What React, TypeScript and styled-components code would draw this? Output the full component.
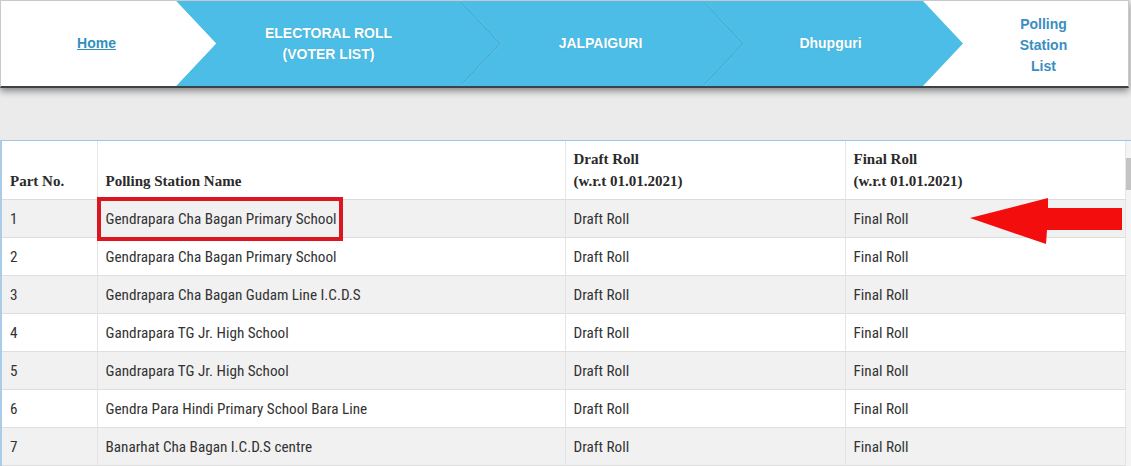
import React from "react";
import styled, { createGlobalStyle } from "styled-components";

const GlobalStyle = createGlobalStyle`
  html, body {
    margin: 0;
    padding: 0;
    background: #ebebeb;
    overflow: hidden;
  }
`;

interface Crumb {
  label: string[];
  tone: "home" | "blue" | "current";
  width: number;
  shift?: number;
}

const crumbs: Crumb[] = [
  { label: ["Home"], tone: "home", width: 215, shift: 8 },
  { label: ["ELECTORAL ROLL", "(VOTER LIST)"], tone: "blue", width: 325, shift: -10 },
  { label: ["JALPAIGURI"], tone: "blue", width: 283, shift: -2 },
  { label: ["Dhupguri"], tone: "blue", width: 259, shift: -3 },
  { label: ["Polling", "Station", "List"], tone: "current", width: 209, shift: -4 },
];

const rows = [
  ["1", "Gendrapara Cha Bagan Primary School"],
  ["2", "Gendrapara Cha Bagan Primary School"],
  ["3", "Gendrapara Cha Bagan Gudam Line I.C.D.S"],
  ["4", "Gandrapara TG Jr. High School"],
  ["5", "Gandrapara TG Jr. High School"],
  ["6", "Gendra Para Hindi Primary School Bara Line"],
  ["7", "Banarhat Cha Bagan I.C.D.S centre"],
];

export default function App() {
  return (
    <>
      <GlobalStyle />
      <Page>
        <Breadcrumb>
          {crumbs.map((c, i) => (
            <CrumbItem key={i} $tone={c.tone} $w={c.width} $first={i === 0}>
              {c.tone === "blue" && i < 3 && (
                <Divider viewBox="0 0 40 86" preserveAspectRatio="none">
                  <polyline
                    points="0,0 40,43 0,86"
                    fill="none"
                    stroke="#3fa9d3"
                    strokeWidth="2"
                  />
                </Divider>
              )}
              <CrumbText $tone={c.tone} $shift={c.shift ?? 0}>
                {c.label.map((l) => (
                  <span key={l}>{l}</span>
                ))}
              </CrumbText>
            </CrumbItem>
          ))}
        </Breadcrumb>

        <TablePanel>
          <Table>
            <colgroup>
              <col style={{ width: 95 }} />
              <col style={{ width: 468 }} />
              <col style={{ width: 280 }} />
              <col style={{ width: 280 }} />
            </colgroup>
            <thead>
              <tr>
                <Th>Part No.</Th>
                <Th>Polling Station Name</Th>
                <Th>
                  Draft Roll
                  <br />
                  (w.r.t 01.01.2021)
                </Th>
                <Th>
                  Final Roll
                  <br />
                  (w.r.t 01.01.2021)
                </Th>
              </tr>
            </thead>
            <tbody>
              {rows.map(([no, name]) => (
                <Row key={no}>
                  <Td>{no}</Td>
                  <Td>{name}</Td>
                  <Td>Draft Roll</Td>
                  <Td>Final Roll</Td>
                </Row>
              ))}
            </tbody>
          </Table>
          <ScrollTrack>
            <ScrollThumb />
          </ScrollTrack>

          <Highlight />
          <Pointer viewBox="0 0 156 50">
            <polygon
              points="1,21 79,1 79,11 153,11 153,33 78,33 77,47"
              fill="#f40d0d"
            />
          </Pointer>
        </TablePanel>
      </Page>
    </>
  );
}

const Page = styled.div`
  width: 1131px;
  height: 466px;
  overflow: hidden;
  display: flex;
  flex-direction: column;
  gap: 52px;
`;

const Breadcrumb = styled.nav`
  flex: 0 0 auto;
  display: flex;
  height: 85px;
  width: 1127px;
  background: #fff;
  border: 1px solid #c9c9c9;
  border-bottom: 2px solid #3b4248;
  box-shadow: 0 3px 7px rgba(0, 0, 0, 0.45);
  position: relative;
  z-index: 1;
`;

const CrumbItem = styled.div<{ $tone: string; $w: number; $first: boolean }>`
  position: relative;
  flex: 0 0 ${({ $w }) => $w}px;
  height: 100%;
  display: flex;
  align-items: center;
  justify-content: center;
  margin-left: ${({ $first }) => ($first ? 0 : -40)}px;
  padding-left: ${({ $first }) => ($first ? 0 : 40)}px;
  padding-right: ${({ $tone }) => ($tone === "current" ? 0 : 40)}px;
  padding-top: ${({ $tone }) => ($tone === "current" ? 4 : 0)}px;
  box-sizing: border-box;
  background: ${({ $tone }) =>
    $tone === "blue" ? "#4cbde6" : $tone === "home" ? "#fff" : "transparent"};
  z-index: ${({ $tone }) => ($tone === "home" ? 2 : $tone === "blue" ? 1 : 0)};
  clip-path: ${({ $tone, $first }) =>
    $tone === "current"
      ? "none"
      : $first
      ? "polygon(0 0, calc(100% - 40px) 0, 100% 50%, calc(100% - 40px) 100%, 0 100%)"
      : "polygon(0 0, calc(100% - 40px) 0, 100% 50%, calc(100% - 40px) 100%, 0 100%, 40px 50%)"};
`;

const Divider = styled.svg`
  position: absolute;
  right: 0;
  top: 0;
  width: 40px;
  height: 100%;
`;

const CrumbText = styled.div<{ $tone: string; $shift: number }>`
  display: flex;
  flex-direction: column;
  align-items: center;
  margin-left: ${({ $shift }) => $shift * 2}px;
  font-family: "Liberation Sans", Arial, sans-serif;
  font-weight: bold;
  font-size: 14px;
  line-height: 21px;
  text-align: center;
  color: ${({ $tone }) =>
    $tone === "blue" ? "#fff" : $tone === "home" ? "#2f8fbd" : "#3a8ec0"};
  text-decoration: ${({ $tone }) => ($tone === "home" ? "underline" : "none")};
  text-shadow: ${({ $tone }) =>
    $tone === "blue" ? "0 0 1px rgba(0,0,0,0.15)" : "none"};
`;

const TablePanel = styled.div`
  position: relative;
  display: flex;
  align-items: flex-start;
  border-top: 1px solid #9cc6e4;
  border-left: 2px solid #a9cde8;
  background: #fff;
  flex: 1 0 auto;
`;

const Table = styled.table`
  width: 1123px;
  border-collapse: collapse;
  table-layout: fixed;
  color: #333;
`;

const Th = styled.th`
  height: 51px;
  padding: 0 8px 7px;
  vertical-align: bottom;
  text-align: left;
  font-family: "Liberation Serif", "Times New Roman", serif;
  font-size: 15px;
  font-weight: bold;
  line-height: 22px;
  color: #2a2a2a;
  background: #fff;
  border-right: 1px solid #e6e6e6;
  border-bottom: 1px solid #dcdcdc;
`;

const Row = styled.tr`
  &:nth-child(odd) {
    background: #f1f1f1;
  }
  &:nth-child(even) {
    background: #fff;
  }
`;

const Td = styled.td`
  height: 37px;
  padding: 0 8px;
  font-family: "Roboto Condensed", "Liberation Sans Narrow", "Liberation Sans", sans-serif;
  font-size: 15.2px;
  color: #333;
  white-space: nowrap;
  border-right: 1px solid #e4e4e4;
  border-bottom: 1px solid #dedede;
`;

const ScrollTrack = styled.div`
  width: 6px;
  align-self: stretch;
  background: #f4f4f4;
  padding-top: 17px;
`;

const ScrollThumb = styled.div`
  width: 6px;
  height: 32px;
  background: #c4c4c4;
`;

const Highlight = styled.div`
  position: absolute;
  left: 95px;
  top: 56px;
  width: 238px;
  height: 36px;
  border: 4px solid #dc1620;
`;

const Pointer = styled.svg`
  position: absolute;
  left: 967px;
  top: 56px;
  width: 156px;
  height: 50px;
`;
